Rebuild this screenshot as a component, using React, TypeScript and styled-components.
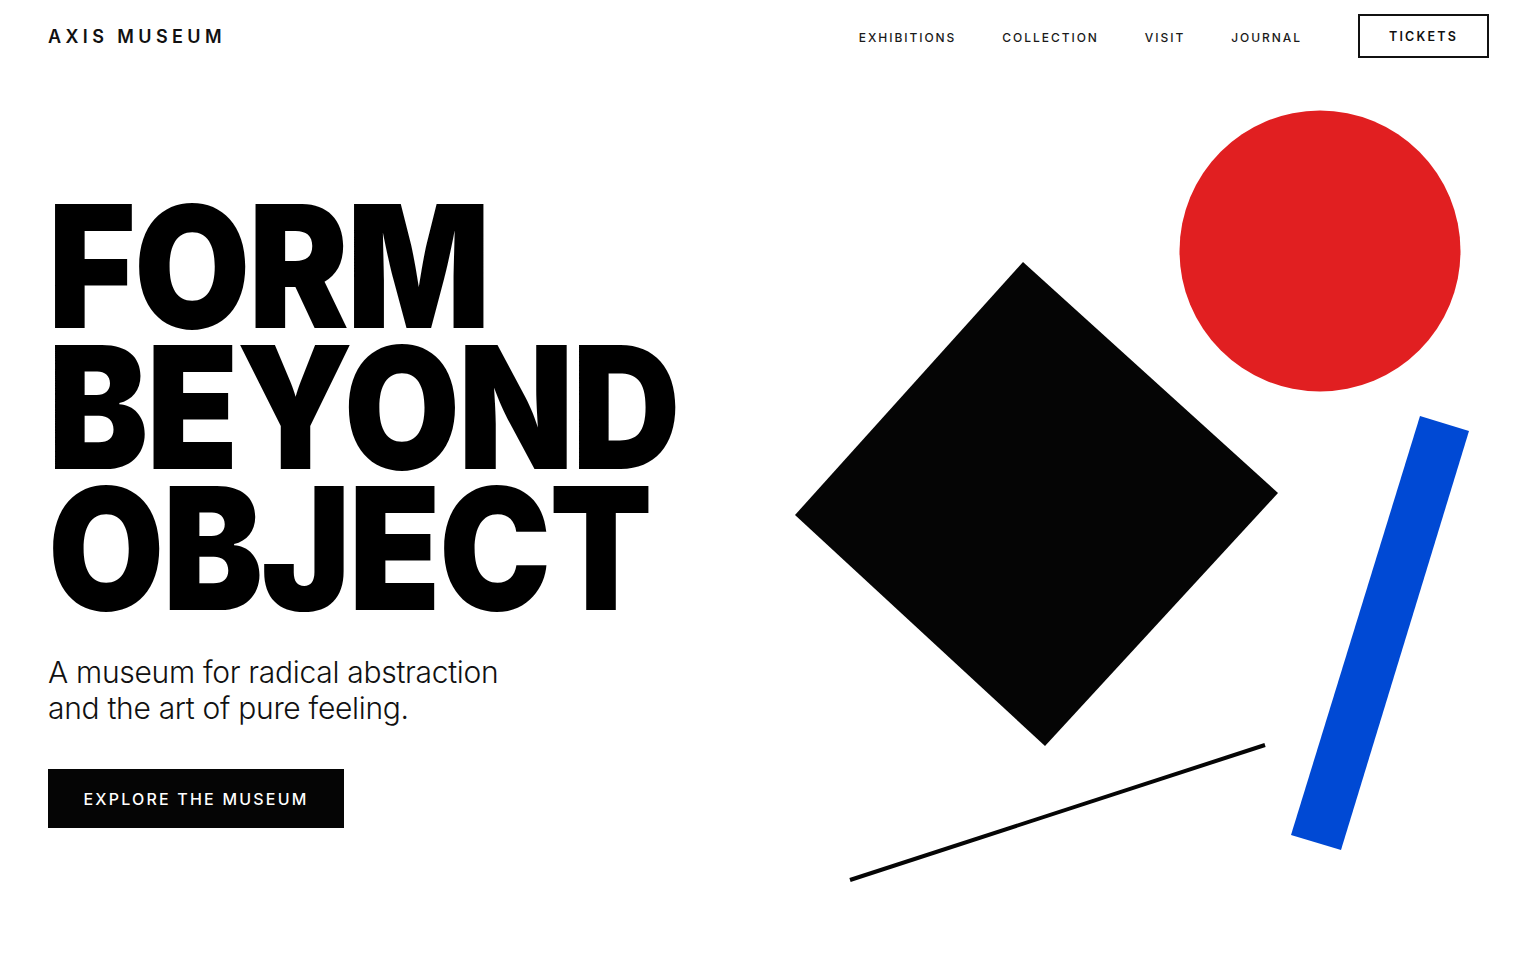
import React from "react";
import styled, { createGlobalStyle } from "styled-components";

const Global = createGlobalStyle`
  html, body { margin: 0; padding: 0; background: #ffffff; }
  body { font-family: "Inter", "Liberation Sans", sans-serif; color: #0a0a0a; }
  * { box-sizing: border-box; }
`;

const Page = styled.div`
  width: 1536px;
  height: 960px;
  overflow: hidden;
  background: #ffffff;
`;

const Header = styled.header`
  height: 72px;
  padding: 0 47px 0 48px;
  display: flex;
  align-items: center;
  justify-content: space-between;
`;

const Logo = styled.div`
  font-family: "Inter", sans-serif;
  font-weight: 600;
  font-size: 18px;
  letter-spacing: 4.4px;
  color: #111;
`;

const Nav = styled.nav`
  display: flex;
  align-items: center;
  gap: 46px;
`;

const NavLink = styled.a`
  font-family: "Inter", sans-serif;
  font-size: 12px;
  font-weight: 500;
  letter-spacing: 1.95px;
  color: #1a1a1a;
  text-decoration: none;
  padding-top: 3px;
`;

const TicketButton = styled.button`
  height: 44px;
  width: 131px;
  border: 2px solid #111;
  background: #fff;
  font-family: "Inter", sans-serif;
  font-size: 12.5px;
  font-weight: 600;
  letter-spacing: 2.2px;
  color: #111;
  padding: 0;
  margin-left: 10px;
`;

const Hero = styled.main`
  display: flex;
  justify-content: space-between;
  padding: 0 36px 0 48px;
`;

const TextColumn = styled.section`
  padding-top: 124px;
  display: flex;
  flex-direction: column;
  align-items: flex-start;
`;

const Headline = styled.h1`
  margin: 0;
  font-family: "Inter", sans-serif;
  font-weight: 900;
  font-size: 170px;
  line-height: 141px;
  letter-spacing: -2px;
  color: #000;
  text-transform: uppercase;
  transform: scaleX(0.883);
  transform-origin: 0 0;
`;

const Subtitle = styled.p`
  margin: 35px 0 0;
  font-family: "Inter", sans-serif;
  font-weight: 300;
  font-size: 30px;
  line-height: 36px;
  letter-spacing: -0.3px;
  color: #111;
`;

const CTA = styled.button`
  margin-top: 43px;
  width: 296px;
  height: 59px;
  background: #050505;
  color: #fff;
  border: none;
  font-family: "Inter", sans-serif;
  font-size: 16px;
  font-weight: 500;
  letter-spacing: 2.2px;
  padding: 0;
`;

const Art = styled.svg`
  display: block;
  margin-top: 28px;
  flex-shrink: 0;
`;

export default function App() {
  return (
    <Page>
      <Global />
      <Header>
        <Logo>AXIS MUSEUM</Logo>
        <Nav>
          <NavLink href="#">EXHIBITIONS</NavLink>
          <NavLink href="#">COLLECTION</NavLink>
          <NavLink href="#">VISIT</NavLink>
          <NavLink href="#">JOURNAL</NavLink>
          <TicketButton>TICKETS</TicketButton>
        </Nav>
      </Header>
      <Hero>
        <TextColumn>
          <Headline>
            Form
            <br />
            Beyond
            <br />
            Object
          </Headline>
          <Subtitle>
            A museum for radical abstraction
            <br />
            and the art of pure feeling.
          </Subtitle>
          <CTA>EXPLORE THE MUSEUM</CTA>
        </TextColumn>
        <Art width="720" height="800" viewBox="0 0 720 800">
          <circle cx="540" cy="151" r="140.5" fill="#e11f21" />
          <polygon points="243,162 498,393 265,646 15,415" fill="#050505" />
          <polygon points="640,316 689,331 561,750 511,735" fill="#0049d4" />
          <line x1="70" y1="780" x2="485" y2="645" stroke="#050505" strokeWidth="4" />
        </Art>
      </Hero>
    </Page>
  );
}
